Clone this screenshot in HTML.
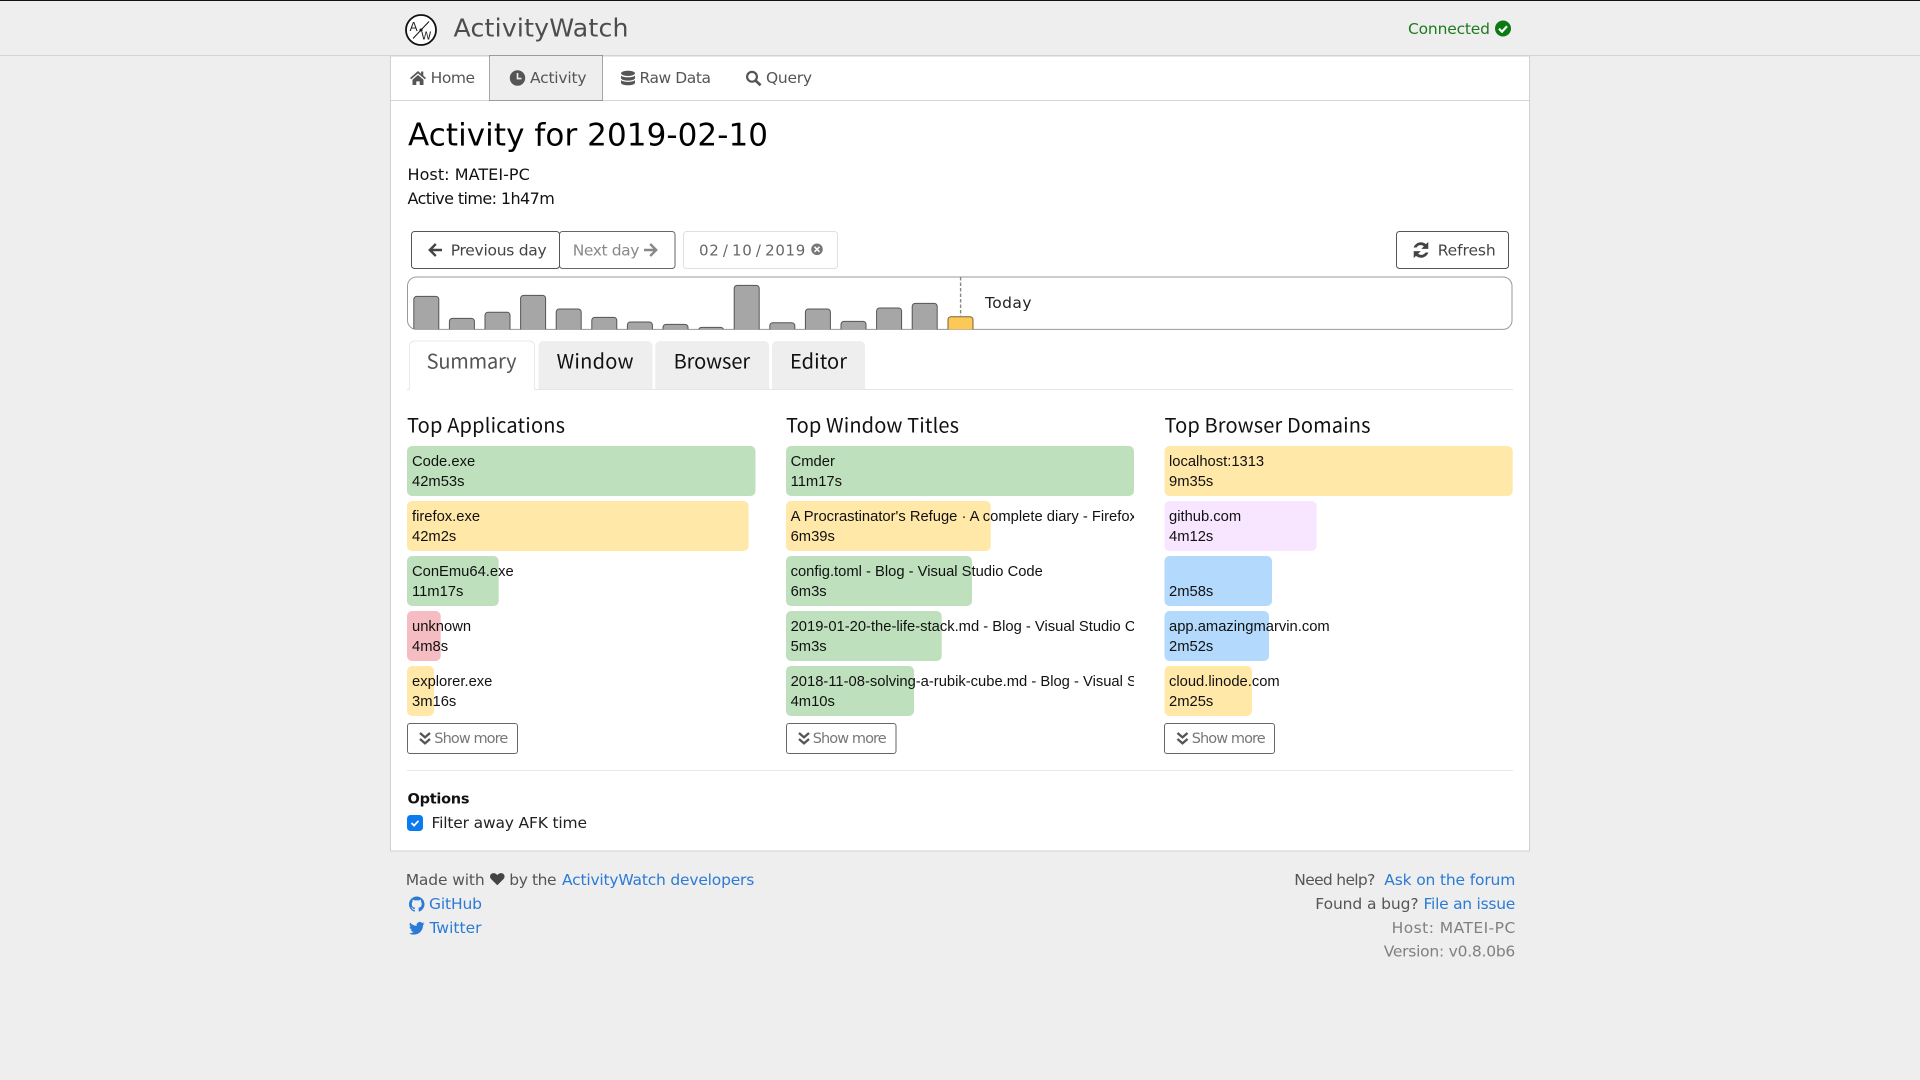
<!DOCTYPE html>
<html lang="en">
<head>
<meta charset="utf-8">
<title>ActivityWatch</title>
<style>
html,body{margin:0;padding:0;background:#eee;width:1920px;height:1080px;overflow:hidden}
svg{display:block}
text{font-family:"DejaVu Sans","Liberation Sans",sans-serif;font-size:15.5px;white-space:pre}
.r{font-family:"Liberation Sans",Arial,sans-serif;font-size:14.75px;fill:#111}
.h{font-family:"Noto Sans CJK SC","Liberation Sans",sans-serif;font-size:20px;fill:#111}
.n{fill:#555}
.l{fill:#2b7bd6}
.g{fill:#808080}
.m{fill:#777;font-size:14.5px}
</style>
</head>
<body>
<svg xmlns="http://www.w3.org/2000/svg" width="1920" height="1080" viewBox="0 0 1920 1080">
<defs>
<clipPath id="c1"><rect x="407" y="440" width="348" height="280"/></clipPath>
<clipPath id="c2"><rect x="786" y="440" width="348" height="280"/></clipPath>
<clipPath id="c3"><rect x="1164" y="440" width="349" height="280"/></clipPath>
<clipPath id="tl"><rect x="408" y="277" width="1105" height="52.4" rx="9"/></clipPath>
<path id="chev" d="M0 0l5 4.4 5-4.4M0 6l5 4.4 5-4.4" fill="none" stroke="#555" stroke-width="2.3"/>
</defs>

<!-- page -->
<rect width="1920" height="1080" fill="#eee"/>
<rect width="1920" height="1" fill="#111"/>
<rect y="55" width="1920" height="1" fill="#d4d4d4"/>
<rect x="390.5" y="56" width="1139" height="795" fill="#fff" stroke="#d0d0d0"/>

<!-- brand -->
<circle cx="421" cy="30" r="15" fill="#fff" stroke="#111" stroke-width="1.8"/>
<path d="M413 38.5L429 21.5" stroke="#111" stroke-width="1"/>
<circle cx="421" cy="30" r="1.5" fill="#111"/>
<text x="409.5" y="31" style="font-size:12px" fill="#222">A</text>
<text x="421" y="39.5" style="font-size:10.5px" fill="#222">W</text>
<text x="453.5" y="36.7" style="font-size:25.2px" textLength="175" fill="#4d4d4d">ActivityWatch</text>
<text x="1408" y="34" textLength="82" fill="#1f7a1f">Connected</text>
<circle cx="1503" cy="28.5" r="8" fill="#0b7a12"/>
<path d="M1499 28.7l3 3 5-5.4" fill="none" stroke="#fff" stroke-width="2.2"/>

<!-- nav -->
<rect x="391" y="100" width="1138" height="1" fill="#d6d6d6"/>
<rect x="489.5" y="55.5" width="113" height="45" fill="#eee" stroke="#555" stroke-width="1" stroke-dasharray="1 1"/>
<path d="M418 71L410 78l1.1 1.3L418 73.4l6.9 5.9L426 78l-2.7-2.4V71.5h-2.2v2.2zM412.5 79.8L418 75l5.5 4.8v5.2h-3.8v-3.6h-3.4V85h-3.8z" fill="#555"/>
<text x="430.6" y="83" textLength="44.5" class="n">Home</text>
<circle cx="517.5" cy="78" r="7.7" fill="#555"/>
<path d="M517.5 73v5.6h4" fill="none" stroke="#eee" stroke-width="1.6"/>
<text x="530" y="83" textLength="56.5" class="n">Activity</text>
<path d="M621 73.3c0-1.5 3.1-2.6 7-2.6s7 1.1 7 2.6-3.1 2.7-7 2.7-7-1.2-7-2.7zM621 75.7c1.7 1.2 4.2 1.6 7 1.6s5.3-.4 7-1.6v2.4c0 1.4-3.1 2.5-7 2.5s-7-1.1-7-2.5zM621 80.3c1.7 1.2 4.2 1.6 7 1.6s5.3-.4 7-1.6v2.4c0 1.5-3.1 2.6-7 2.6s-7-1.1-7-2.6z" fill="#555"/>
<text x="639.5" y="83" textLength="71.5" class="n">Raw Data</text>
<circle cx="752" cy="76.8" r="4.9" fill="none" stroke="#555" stroke-width="2.2"/>
<path d="M755.6 80.6l5 4.6" stroke="#555" stroke-width="2.7"/>
<text x="766" y="83" textLength="46" class="n">Query</text>

<!-- title -->
<text x="408" y="145.7" style="font-size:31px" textLength="360" fill="#000">Activity for 2019-02-10</text>
<text x="407.5" y="180" style="font-size:16px" textLength="122.3" fill="#111">Host: MATEI-PC</text>
<text x="407.5" y="204" style="font-size:16px" textLength="147.3" fill="#111">Active time: 1h47m</text>

<!-- date buttons -->
<rect x="559.5" y="231.5" width="115.5" height="37" rx="3" fill="#fff" stroke="#666"/>
<rect x="411.5" y="231.5" width="148" height="37" rx="3" fill="#fff" stroke="#555"/>
<path d="M442 250h-12M435.8 244l-6 6 6 6" fill="none" stroke="#444" stroke-width="2.4"/>
<text x="450.7" y="255.5" textLength="96" fill="#444">Previous day</text>
<text x="572.7" y="255.5" textLength="66.7" fill="#888">Next day</text>
<path d="M644 250h12M650.2 244l6 6-6 6" fill="none" stroke="#888" stroke-width="2.4"/>
<rect x="683.5" y="231.5" width="154" height="37" rx="3" fill="#fff" stroke="#e0e0e0"/>
<text x="699" y="255.5" textLength="106.3" style="font-size:15px;word-spacing:-2px" fill="#666">02 / 10 / 2019</text>
<circle cx="817" cy="249.3" r="5.8" fill="#777"/>
<path d="M814.5 246.8l5 5m0-5l-5 5" stroke="#fff" stroke-width="1.5"/>

<rect x="1396.5" y="231.5" width="112" height="37" rx="3" fill="#fff" stroke="#555"/>
<path d="M1413.6 247.5a7.8 7.8 0 0 1 12.4-3.4l2.3-2.2v7h-7l2.6-2.6a4.8 4.8 0 0 0-7.3 1.2z" fill="#444"/>
<path d="M1428.4 252.5a7.8 7.8 0 0 1-12.4 3.4l-2.3 2.2v-7h7l-2.6 2.6a4.8 4.8 0 0 0 7.3-1.2z" fill="#444"/>
<text x="1437.7" y="255.5" textLength="58" fill="#444">Refresh</text>

<!-- timeline -->
<rect x="407.5" y="277" width="1104.5" height="52.4" rx="9" fill="#fff" stroke="#999"/>
<g clip-path="url(#tl)" fill="#a6a6a6" stroke="#555" stroke-width="1">
<rect x="413.8" y="296.4" width="25" height="40" rx="3"/>
<rect x="449.4" y="318.4" width="25" height="20" rx="3"/>
<rect x="485" y="312.2" width="25" height="24" rx="3"/>
<rect x="520.6" y="295.4" width="25" height="40" rx="3"/>
<rect x="556.2" y="309" width="25" height="30" rx="3"/>
<rect x="591.8" y="317.4" width="25" height="20" rx="3"/>
<rect x="627.4" y="322" width="25" height="20" rx="3"/>
<rect x="663" y="324.4" width="25" height="20" rx="3"/>
<rect x="698.6" y="327.4" width="25" height="20" rx="3"/>
<rect x="734.2" y="285.4" width="25" height="50" rx="3"/>
<rect x="769.8" y="322.7" width="25" height="20" rx="3"/>
<rect x="805.4" y="309" width="25" height="30" rx="3"/>
<rect x="841" y="321.4" width="25" height="20" rx="3"/>
<rect x="876.6" y="308" width="25" height="30" rx="3"/>
<rect x="912.2" y="303.4" width="25" height="34" rx="3"/>
<rect x="948" y="316.7" width="25" height="20" rx="3" fill="#fcc858" stroke="#7a6330"/>
</g>
<path d="M960.6 277v39" stroke="#888" stroke-width="1.4" stroke-dasharray="3.5 2"/>
<text x="985" y="308" textLength="46.5" fill="#222">Today</text>

<!-- tabs -->
<rect x="407" y="389" width="1106" height="1" fill="#e6e6e6"/>
<path d="M409.5 390V346a5 5 0 0 1 5-5h115a5 5 0 0 1 5 5v44" fill="#fff" stroke="#eaeaea"/>
<rect x="410" y="388" width="124" height="3" fill="#fff"/>
<path d="M538.5 389V346a5 5 0 0 1 5-5h104a5 5 0 0 1 5 5v43z" fill="#eee"/>
<path d="M655.2 389V346a5 5 0 0 1 5-5h104a5 5 0 0 1 5 5v43z" fill="#eee"/>
<path d="M772 389V346a5 5 0 0 1 5-5h83a5 5 0 0 1 5 5v43z" fill="#eee"/>
<text x="426.6" y="368.7" textLength="90" class="h" style="fill:#555">Summary</text>
<text x="556.6" y="368.7" textLength="77" class="h">Window</text>
<text x="673.6" y="368.7" textLength="76.5" class="h">Browser</text>
<text x="790" y="368.7" textLength="57" class="h">Editor</text>

<!-- headings -->
<text x="407" y="432.7" textLength="158" class="h">Top Applications</text>
<text x="786" y="432.7" textLength="173" class="h">Top Window Titles</text>
<text x="1164.5" y="432.7" textLength="206" class="h">Top Browser Domains</text>

<!-- column 1 -->
<rect x="407" y="446" width="348.5" height="50" rx="5" fill="#bee0bd"/>
<rect x="407" y="501" width="341.6" height="50" rx="5" fill="#ffe8a8"/>
<rect x="407" y="556" width="91.7" height="50" rx="5" fill="#bee0bd"/>
<rect x="407" y="611" width="33.7" height="50" rx="5" fill="#f5bdc1"/>
<rect x="407" y="666" width="27" height="50" rx="5" fill="#ffe8a8"/>
<g clip-path="url(#c1)">
<text x="412" y="466" class="r">Code.exe</text><text x="412" y="486" class="r">42m53s</text>
<text x="412" y="521" class="r">firefox.exe</text><text x="412" y="541" class="r">42m2s</text>
<text x="412" y="576" class="r">ConEmu64.exe</text><text x="412" y="596" class="r">11m17s</text>
<text x="412" y="631" class="r">unknown</text><text x="412" y="651" class="r">4m8s</text>
<text x="412" y="686" class="r">explorer.exe</text><text x="412" y="706" class="r">3m16s</text>
</g>

<!-- column 2 -->
<rect x="786" y="446" width="348" height="50" rx="5" fill="#bee0bd"/>
<rect x="786" y="501" width="204.7" height="50" rx="5" fill="#ffe8a8"/>
<rect x="786" y="556" width="186" height="50" rx="5" fill="#bee0bd"/>
<rect x="786" y="611" width="155.7" height="50" rx="5" fill="#bee0bd"/>
<rect x="786" y="666" width="128" height="50" rx="5" fill="#bee0bd"/>
<g clip-path="url(#c2)">
<text x="790.6" y="466" class="r">Cmder</text><text x="790.6" y="486" class="r">11m17s</text>
<text x="790.6" y="521" class="r">A Procrastinator's Refuge · A complete diary - Firefox</text><text x="790.6" y="541" class="r">6m39s</text>
<text x="790.6" y="576" class="r">config.toml - Blog - Visual Studio Code</text><text x="790.6" y="596" class="r">6m3s</text>
<text x="790.6" y="631" class="r">2019-01-20-the-life-stack.md - Blog - Visual Studio Code</text><text x="790.6" y="651" class="r">5m3s</text>
<text x="790.6" y="686" class="r">2018-11-08-solving-a-rubik-cube.md - Blog - Visual Studio Code</text><text x="790.6" y="706" class="r">4m10s</text>
</g>

<!-- column 3 -->
<rect x="1164.5" y="446" width="348.2" height="50" rx="5" fill="#ffe8a8"/>
<rect x="1164.5" y="501" width="152.2" height="50" rx="5" fill="#f8e5ff"/>
<rect x="1164.5" y="556" width="107.5" height="50" rx="5" fill="#b3dafc"/>
<rect x="1164.5" y="611" width="104.5" height="50" rx="5" fill="#b3dafc"/>
<rect x="1164.5" y="666" width="87.5" height="50" rx="5" fill="#ffe8a8"/>
<g clip-path="url(#c3)">
<text x="1169" y="466" class="r">localhost:1313</text><text x="1169" y="486" class="r">9m35s</text>
<text x="1169" y="521" class="r">github.com</text><text x="1169" y="541" class="r">4m12s</text>
<text x="1169" y="596" class="r">2m58s</text>
<text x="1169" y="631" class="r">app.amazingmarvin.com</text><text x="1169" y="651" class="r">2m52s</text>
<text x="1169" y="686" class="r">cloud.linode.com</text><text x="1169" y="706" class="r">2m25s</text>
</g>

<!-- show more -->
<rect x="407.5" y="723.5" width="110" height="30" rx="2.5" fill="#fff" stroke="#666"/>
<rect x="786.5" y="723.5" width="109.5" height="30" rx="2.5" fill="#fff" stroke="#666"/>
<rect x="1164.5" y="723.5" width="110" height="30" rx="2.5" fill="#fff" stroke="#666"/>
<use href="#chev" x="420" y="733"/>
<use href="#chev" x="799" y="733"/>
<use href="#chev" x="1177.5" y="733"/>
<text x="434.3" y="743" textLength="74" class="m">Show more</text>
<text x="812.7" y="743" textLength="74" class="m">Show more</text>
<text x="1191.7" y="743" textLength="74" class="m">Show more</text>

<!-- options -->
<rect x="407" y="770" width="1106" height="1" fill="#e8e8e8"/>
<text x="407.5" y="803.3" style="font-size:14.5px;font-weight:bold" textLength="62" fill="#111">Options</text>
<rect x="407" y="815" width="16" height="16" rx="3.5" fill="#0c7bf0"/>
<path d="M411.5 823l2.6 2.6 4.4-4.8" fill="none" stroke="#fff" stroke-width="1.8"/>
<text x="431.5" y="828" textLength="155.5" fill="#222">Filter away AFK time</text>

<!-- footer left -->
<text x="405.7" y="885" textLength="79" class="n">Made with</text>
<path d="M497.3 885.2l-6-5.9c-1.8-1.8-1.6-4.5.2-5.6 1.9-1.2 4.3-.5 5.8 1.4 1.5-1.9 3.9-2.6 5.8-1.4 1.8 1.1 2 3.8.2 5.6z" fill="#444"/>
<text x="509.3" y="885" textLength="47.3" class="n">by the</text>
<text x="562" y="885" textLength="192.3" class="l">ActivityWatch developers</text>
<path transform="translate(409 896.5) scale(.97)" fill="#2b7bd6" d="M8 0C3.58 0 0 3.58 0 8c0 3.54 2.29 6.53 5.47 7.59.4.07.55-.17.55-.38 0-.19-.01-.82-.01-1.49-2.01.37-2.53-.49-2.69-.94-.09-.23-.48-.94-.82-1.13-.28-.15-.68-.52-.01-.53.63-.01 1.08.58 1.23.82.72 1.21 1.87.87 2.33.66.07-.52.28-.87.51-1.07-1.78-.2-3.64-.89-3.64-3.95 0-.87.31-1.59.82-2.15-.08-.2-.36-1.02.08-2.12 0 0 .67-.21 2.2.82.64-.18 1.32-.27 2-.27.68 0 1.36.09 2 .27 1.53-1.04 2.2-.82 2.2-.82.44 1.1.16 1.92.08 2.12.51.56.82 1.27.82 2.15 0 3.07-1.87 3.75-3.65 3.95.29.25.54.73.54 1.48 0 1.07-.01 1.93-.01 2.2 0 .21.15.46.55.38A8.013 8.013 0 0016 8c0-4.42-3.58-8-8-8z"/>
<text x="429" y="909" textLength="53" class="l">GitHub</text>
<path transform="translate(409 920.5) scale(.65)" fill="#2b7bd6" d="M23.953 4.57a10 10 0 01-2.825.775 4.958 4.958 0 002.163-2.723c-.951.555-2.005.959-3.127 1.184a4.92 4.92 0 00-8.384 4.482C7.69 8.095 4.067 6.13 1.64 3.162a4.822 4.822 0 00-.666 2.475c0 1.71.87 3.213 2.188 4.096a4.904 4.904 0 01-2.228-.616v.06a4.923 4.923 0 003.946 4.827 4.996 4.996 0 01-2.212.085 4.936 4.936 0 004.604 3.417 9.867 9.867 0 01-6.102 2.105c-.39 0-.779-.023-1.17-.067a13.995 13.995 0 007.557 2.209c9.053 0 13.998-7.496 13.998-13.985 0-.21 0-.42-.015-.63A9.935 9.935 0 0024 4.59z"/>
<text x="429.5" y="933" textLength="52" class="l">Twitter</text>

<!-- footer right -->
<text x="1294.3" y="885" textLength="81" class="n">Need help?</text>
<text x="1384.3" y="885" textLength="131" class="l">Ask on the forum</text>
<text x="1315.3" y="909" textLength="103.3" class="n">Found a bug?</text>
<text x="1423.5" y="909" textLength="91.8" class="l">File an issue</text>
<text x="1391.6" y="933" textLength="123.7" class="g">Host: MATEI-PC</text>
<text x="1383.7" y="956.5" textLength="131.6" class="g">Version: v0.8.0b6</text>
</svg>
</body>
</html>
